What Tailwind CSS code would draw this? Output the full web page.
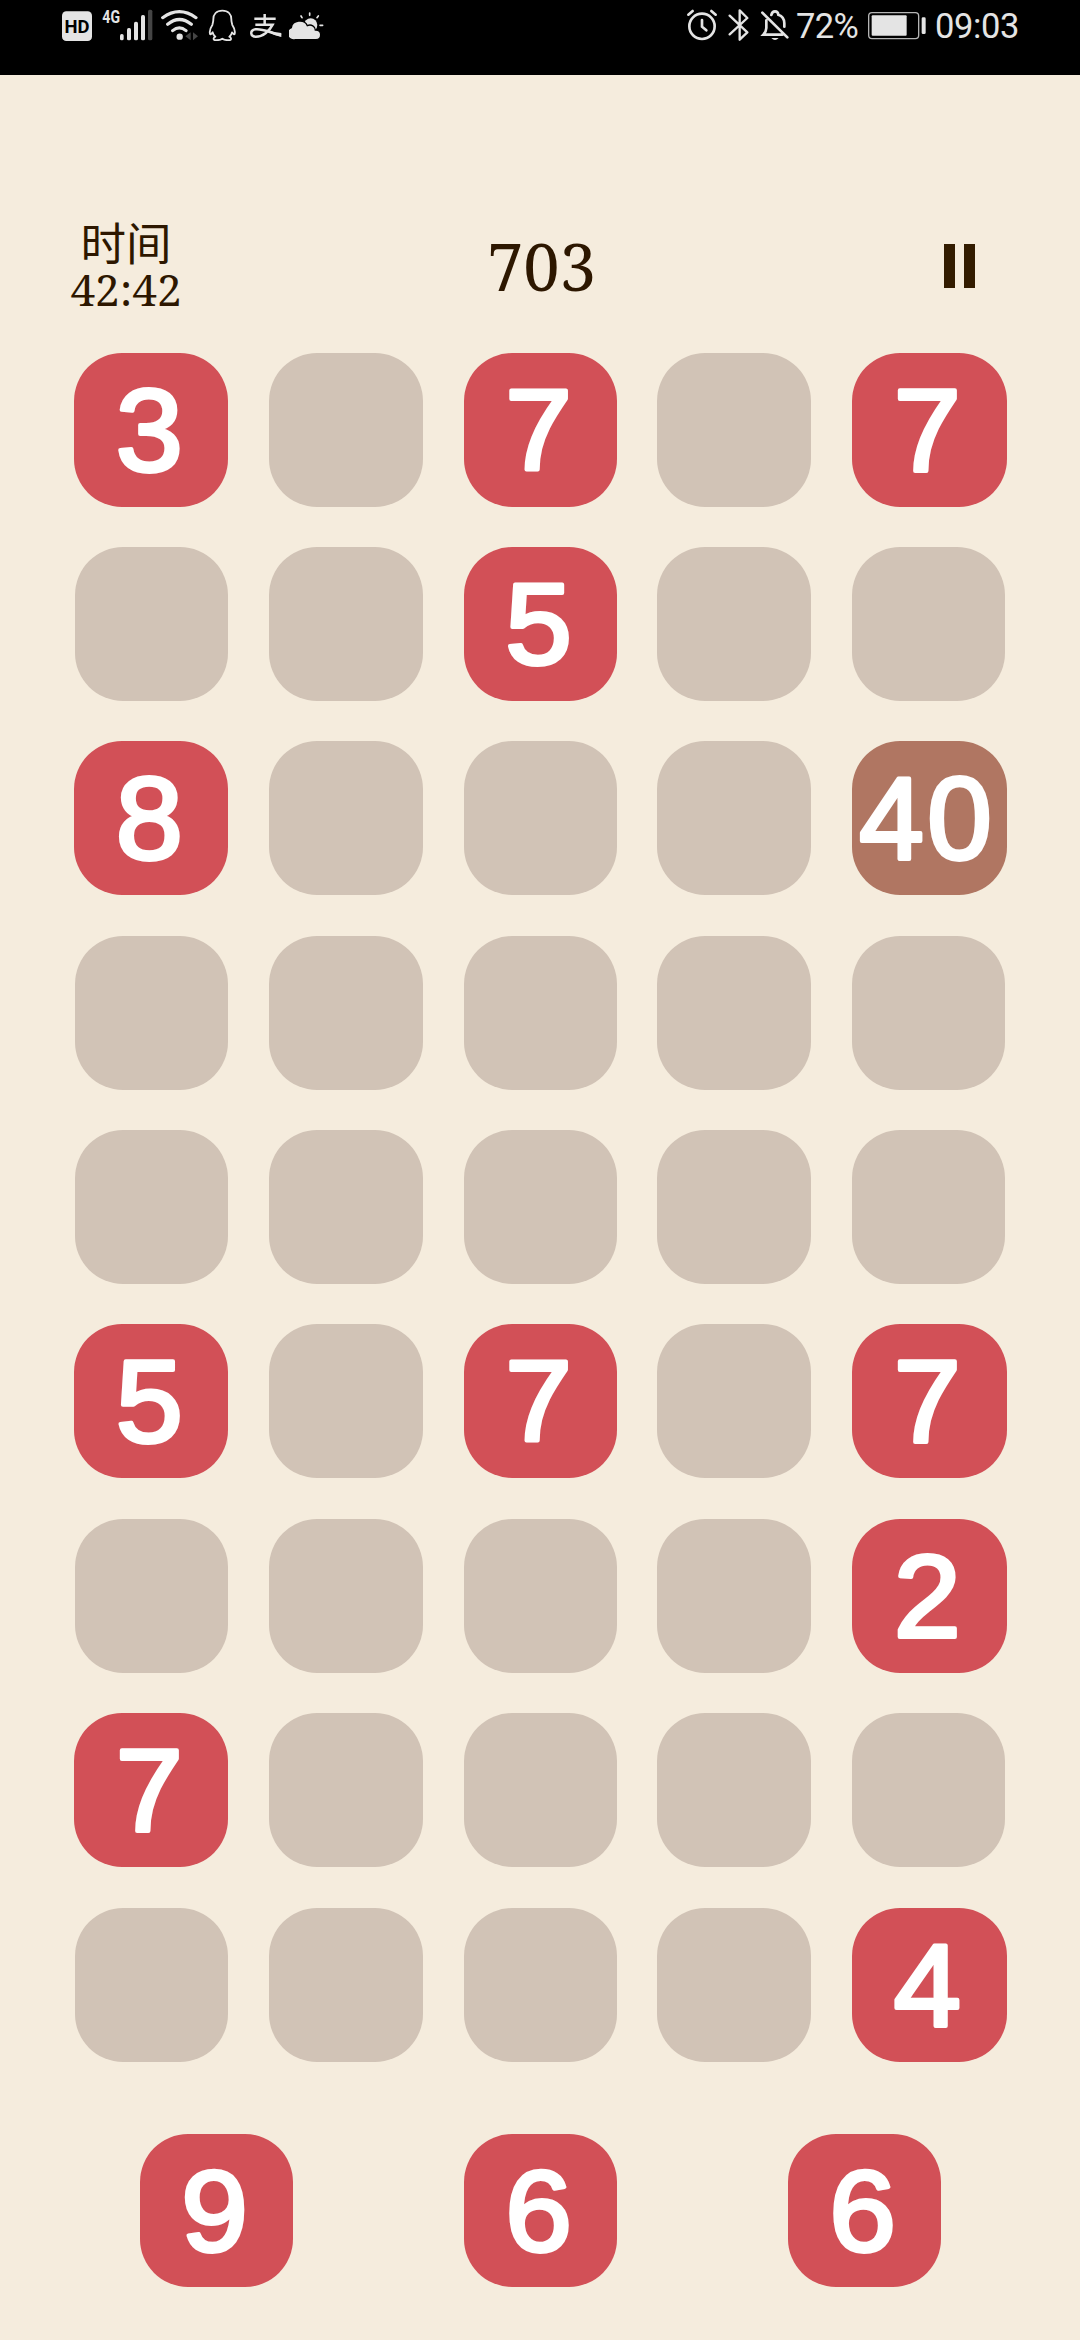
<!DOCTYPE html>
<html lang="zh-CN">
<head>
<meta charset="utf-8">
<title>703</title>
<script src="https://cdn.jsdelivr.net/npm/@tailwindcss/browser@4"></script>
</head>
<body class="w-[1080px] h-[2340px] bg-[#f5ecdd] overflow-hidden flex flex-col">
<!-- status bar -->
<header class="h-[75px] shrink-0 bg-black flex items-start pt-[9px] pl-[60px] pr-[59px] text-[#e4e4e4]">
  <div class="flex">
    <svg class="w-[34px] h-8 overflow-visible" viewBox="30 27 102 96"><rect x="36" y="34" width="90" height="89" rx="13" fill="#e4e4e4"/><text x="81" y="98" text-anchor="middle" font-family="Roboto" font-weight="700" font-size="57" textLength="75" lengthAdjust="spacingAndGlyphs" fill="#000">HD</text></svg>
    <svg class="ml-2 w-[51px] h-8 overflow-visible" viewBox="156 27 153 96" fill="#e4e4e4"><text x="157" y="70" font-family="Roboto" font-weight="700" font-size="55" textLength="53" lengthAdjust="spacingAndGlyphs">4G</text><rect x="210" y="102" width="11" height="19" rx="5"/><rect x="231" y="84" width="12" height="37" rx="5"/><rect x="252" y="65" width="12" height="56" rx="5"/><rect x="273" y="45" width="12" height="76" rx="5"/><rect x="294" y="29" width="13" height="92" rx="5" fill="#454545"/></svg>
    <svg class="ml-[7px] w-[39px] h-8" viewBox="330 27 117 96" fill="none" stroke="#e4e4e4" stroke-width="9.500" stroke-linecap="round"><path d="M338 53Q388 17 438 53M353 73Q388 44 424 73M368 92Q388 75 408 92"/><circle cx="389" cy="110" r="9.500" fill="#e4e4e4" stroke="none"/><path d="M422 97V121L406 109ZM429 97V121L444 109Z" fill="#454545" stroke="none"/></svg>
    <svg class="ml-[9px] w-[28px] h-8" viewBox="475 27 84 96" fill="none" stroke="#e4e4e4" stroke-width="5.500" stroke-linejoin="round"><path d="M518 32C500 32 491 43 491 58C491 66 489 69 488 75C482 84 479 94 481 102C483 105 487 100 489 97C490 103 493 107 497 110C491 113 490 119 495 120C503 121 511 121 518 116C525 121 533 121 541 120C546 119 545 113 539 110C543 107 546 103 547 97C549 100 553 105 555 102C557 94 554 84 548 75C547 69 545 66 545 58C545 43 536 32 518 32Z"/></svg>
    <svg class="ml-[14px] w-[32px] h-8" viewBox="602 27 96 96" fill="none" stroke="#e4e4e4" stroke-width="7.500"><path d="M615 56H679M646 42V74M618 74H670C660 94 640 110 620 110C602 110 601 91 618 88C642 85 662 99 695 106"/><path d="M660 91Q678 99 696 99V111Q676 107 655 95Z" fill="#e4e4e4" stroke="none"/></svg>
    <svg class="ml-[7px] w-[36px] h-8" viewBox="718 27 108 96"><circle cx="783" cy="75" r="20" fill="#e4e4e4"/><path d="M737 119A19 19 0 0 1 725 83C728 60 764 56 773 77C785 71 797 80 797 90C819 89 817 119 799 119Z" fill="#e4e4e4" stroke="#000" stroke-width="4"/><path d="M780 39V46M754 48L757 53M806 48L802 53M811 76H819" stroke="#e4e4e4" stroke-width="5" stroke-linecap="round"/></svg>
  </div>
  <div class="ml-auto flex">
    <svg class="w-[32px] h-8" viewBox="45 27 96 96" fill="none" stroke="#e4e4e4" stroke-width="8" stroke-linecap="round"><circle cx="93" cy="79" r="38"/><path d="M93 60V80L106 91M52 44L65 33M121 33L134 44"/></svg>
    <svg class="ml-[9px] w-[22px] h-8" viewBox="168 27 66 96" fill="none" stroke="#e4e4e4" stroke-width="7" stroke-linejoin="round" stroke-linecap="round"><path d="M176 47L229 97L206 119V31L229 54L176 103"/></svg>
    <svg class="ml-[11px] w-[30px] h-8" viewBox="267 27 90 96" fill="none" stroke="#e4e4e4" stroke-width="8" stroke-linecap="round"><path d="M274 38L349 112M286 61V84Q286 94 277 104H334M301 45Q303 34 312 34Q321 34 322 44Q340 50 340 70V80"/><path d="M301 114H323Q312 126 301 114Z" fill="#e4e4e4" stroke="none"/></svg>
    <span class="ml-[6px] h-8 w-[63px] font-[Roboto] text-[34.500px] leading-[35px] tracking-[-0.700px] whitespace-nowrap">72%</span>
    <svg class="ml-[8px] w-[60px] h-8" viewBox="588 27 180 96"><rect x="593" y="38" width="150" height="78" rx="10" fill="none" stroke="#b5b5b5" stroke-width="4"/><rect x="602" y="46" width="105" height="61" rx="3" fill="#e4e4e4"/><rect x="752" y="52" width="12" height="50" rx="4" fill="#e4e4e4"/></svg>
    <span class="ml-[8px] h-8 w-[86px] font-[Roboto] text-[34.500px] leading-[35px] tracking-[-0.400px] whitespace-nowrap">09:03</span>
  </div>
</header>

<!-- time, score, pause -->
<section class="h-[277px] shrink-0 pt-[139px] grid grid-cols-3 text-[#2d1700]">
  <div class="pl-[66px]">
    <div class="w-[120px] text-center">
      <div class="font-['Noto_Sans_CJK_SC',sans-serif] text-[45.500px] leading-[55px]">时间</div>
      <div class="font-['Noto_Serif',serif] text-[44px] leading-[40px]">42:42</div>
    </div>
  </div>
  <div class="pt-[20px] pl-[3px] text-center text-[65px] leading-[64px] font-['Noto_Serif',serif]">703</div>
  <div class="pt-[30px] pl-[224px] flex gap-[9px]">
    <div class="w-[11px] h-[44px] bg-[#331c00]"></div>
    <div class="w-[11px] h-[44px] bg-[#331c00]"></div>
  </div>
</section>

<main id="board" class="shrink-0 ml-[73.500px] mt-[0.500px] grid grid-cols-[154.500px_154px_153px_154px_154.500px] auto-rows-[154px] gap-x-[40.750px] gap-y-[40.400px]"></main>
<footer id="tray" class="mt-[72px] ml-[139.500px] grid grid-cols-[repeat(3,153px)] auto-rows-[153px] gap-x-[171px]"></footer>

<script>
const rows = [[3,0,7,0,7],[0,0,5,0,0],[8,0,0,0,40],[0,0,0,0,0],[0,0,0,0,0],[5,0,7,0,7],[0,0,0,0,2],[7,0,0,0,0],[0,0,0,0,4]];
const colour = n => n === 0 ? "bg-[#d1c3b6]" : n > 9 ? "bg-[#b07662]" : "bg-[#d25057]";
const label = n => {
  if (!n) return "";
  const wide = n > 9;
  return `<svg class="size-full" viewBox="0 0 154 154"><text transform="translate(75 117.500) scale(${wide ? 1 : 1.04} 1)" text-anchor="middle" font-family="Liberation Sans, Arial, sans-serif" font-size="116" letter-spacing="${wide ? 3.5 : 0}" fill="#fff" stroke="#fff" stroke-width="4" stroke-linejoin="round">${n}</text></svg>`;
};
const tile = (n, col) => {
  const inset = n ? "" : col === 0 ? "ml-[1.500px]" : col === 4 ? "mr-[1.500px]" : "";
  return `<div class="rounded-[48px] ${inset} ${colour(n)} ">${label(n)}</div>`;
};
document.getElementById("board").innerHTML = rows.map(r => r.map(tile).join("")).join("");
document.getElementById("tray").innerHTML = [9,6,6].map(n => tile(n, 1)).join("");
</script>
</body>
</html>
